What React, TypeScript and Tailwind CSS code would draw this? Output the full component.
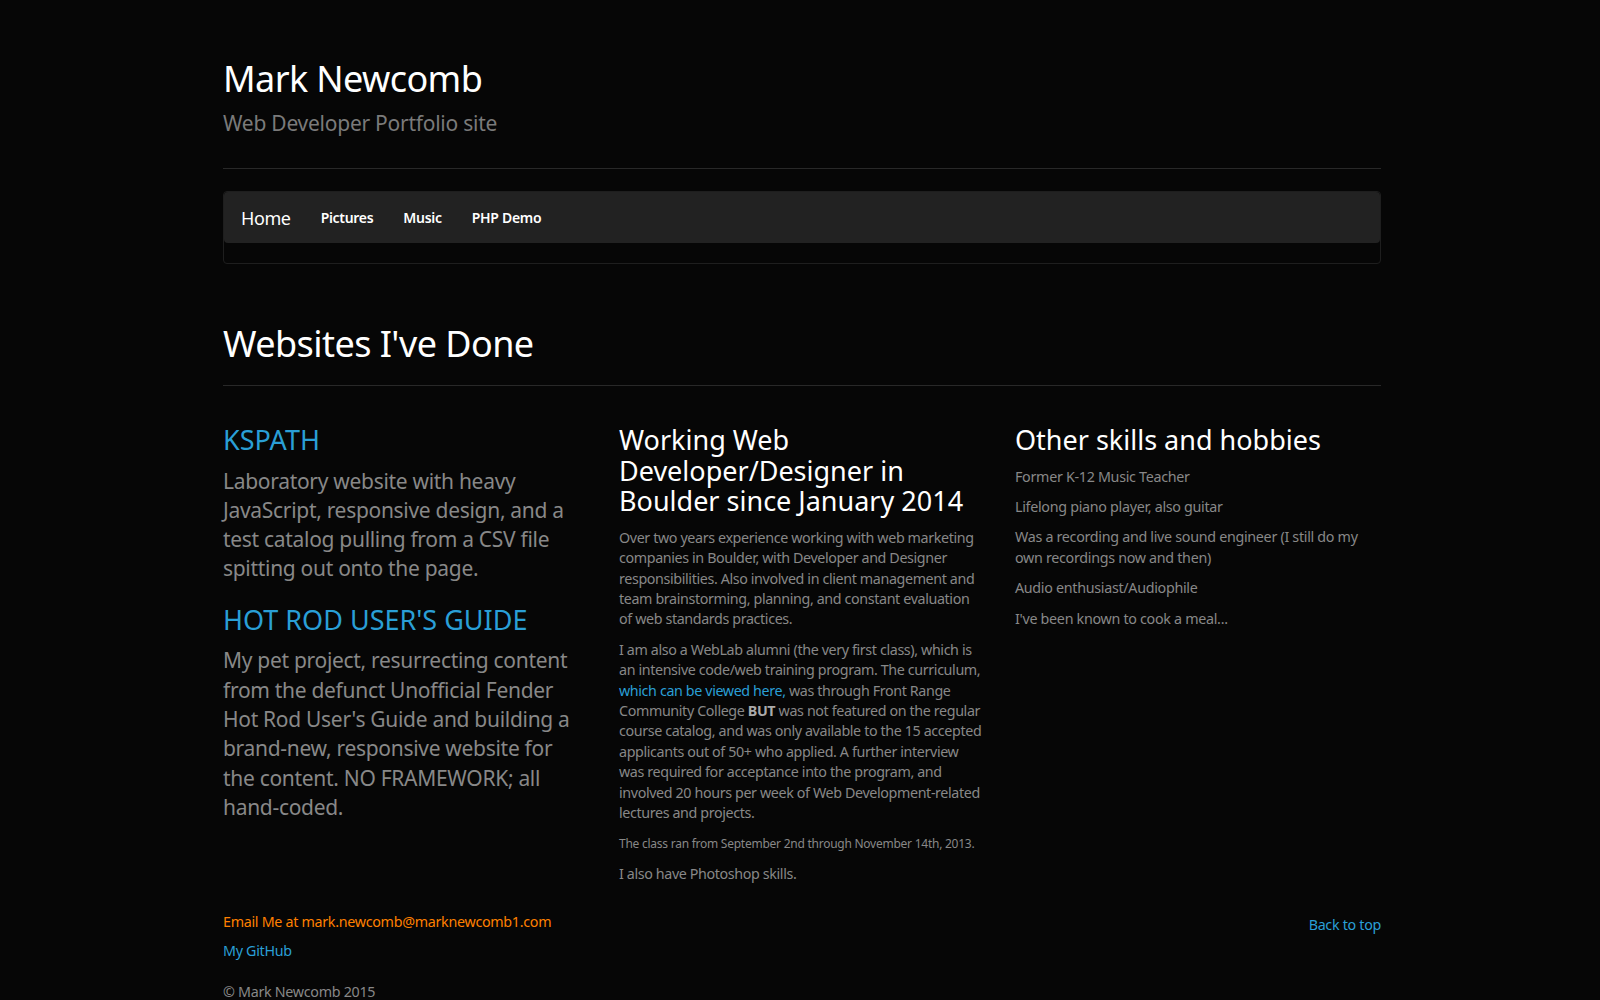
const FONT = "font-['Noto_Sans','Open_Sans',sans-serif]";

const NAV_LINKS = ["Pictures", "Music", "PHP Demo"];

const HOBBIES = [
  "Former K-12 Music Teacher",
  "Lifelong piano player, also guitar",
  "Was a recording and live sound engineer (I still do my own recordings now and then)",
  "Audio enthusiast/Audiophile",
  "I've been known to cook a meal...",
];

export default function App() {
  return (
    <div className={`min-h-screen bg-[#060606] text-[#888] ${FONT}`}>
      <div className="mx-auto w-[1162px] pl-[4px]">
        {/* header */}
        <header className="pt-[59px]">
          <h1 className="text-[36px] leading-[39.6px] tracking-[-0.6px] text-white">
            Mark Newcomb
          </h1>
          <p className="mt-[10px] text-[21px] leading-[29.4px] tracking-[-0.25px] text-[#7a7a7a]">
            Web Developer Portfolio site
          </p>
        </header>
        <hr className="mt-[30px] border-t border-[#282828]" />

        {/* nav */}
        <div className="mt-[22px] rounded-[4px] border border-[#1e1e1e] pb-[20px]">
          <nav className="flex h-[51px] items-center gap-[30px] rounded-[4px] bg-[#222] pl-[17px]">
            <span className="text-[18px] leading-[20px] tracking-[-0.4px] text-white">Home</span>
            {NAV_LINKS.map((link) => (
              <span
                key={link}
                className="text-[14px] font-semibold leading-[20px] tracking-[-0.3px] text-white"
              >
                {link}
              </span>
            ))}
          </nav>
        </div>

        {/* page header */}
        <div className="mt-[60px] border-b border-[#282828] pb-[21px]">
          <h1 className="text-[36px] leading-[40px] tracking-[-0.55px] text-white">
            Websites I've Done
          </h1>
        </div>

        {/* columns */}
        <div className="mt-[39px] grid grid-cols-3 gap-x-[30px]">
          <div className="pr-[3px] tracking-[-0.3px]">
            <h2 className="text-[27px] leading-[30.6px] tracking-normal text-[#2a9fd6]">
              KSPATH
            </h2>
            <p className="mt-[11px] text-[21px] leading-[29.3px]">
              Laboratory website with heavy JavaScript, responsive design, and a test catalog
              pulling from a CSV file spitting out onto the page.
            </p>
            <h2 className="mt-[21px] text-[27px] leading-[30.6px] tracking-normal text-[#2a9fd6]">
              HOT ROD USER'S GUIDE
            </h2>
            <p className="mt-[11px] text-[21px] leading-[29.3px]">
              My pet project, resurrecting content from the defunct Unofficial Fender Hot Rod
              User's Guide and building a brand-new, responsive website for the content. NO
              FRAMEWORK; all hand-coded.
            </p>
          </div>

          <div className="text-[14.3px] leading-[20.4px] tracking-[-0.38px]">
            <h2 className="text-[27px] leading-[30.6px] tracking-normal text-white">
              Working Web Developer/Designer in Boulder since January 2014
            </h2>
            <p className="mt-[11px]">
              Over two years experience working with web marketing companies in Boulder, with
              Developer and Designer responsibilities. Also involved in client management and
              team brainstorming, planning, and constant evaluation of web standards practices.
            </p>
            <p className="mt-[10px]">
              I am also a WebLab alumni (the very first class), which is an intensive code/web
              training program. The curriculum,{" "}
              <a className="text-[#2a9fd6]" href="#">
                which can be viewed here,
              </a>{" "}
              was through Front Range Community College <b className="text-[#aaa]">BUT</b> was
              not featured on the regular course catalog, and was only available to the 15
              accepted applicants out of 50+ who applied. A further interview was required for
              acceptance into the program, and involved 20 hours per week of Web
              Development-related lectures and projects.
            </p>
            <p className="mt-[10px]">
              <small className="text-[12px] tracking-[-0.25px]">
                The class ran from September 2nd through November 14th, 2013.
              </small>
            </p>
            <p className="mt-[9px]">I also have Photoshop skills.</p>
          </div>

          <div className="text-[14.3px] leading-[20.4px] tracking-[-0.3px]">
            <h2 className="text-[27px] leading-[30.6px] tracking-normal text-white">
              Other skills and hobbies
            </h2>
            <div className="mt-[11px] flex flex-col gap-[10px]">
              {HOBBIES.map((h) => (
                <p key={h}>{h}</p>
              ))}
            </div>
          </div>
        </div>

        {/* footer */}
        <footer className="mt-[28px] pb-[20px] text-[14.3px] leading-[20.4px] tracking-[-0.3px]">
          <div className="flex justify-between">
            <div>
              <p className="text-[#ff8000]">Email Me at mark.newcomb@marknewcomb1.com</p>
              <p className="mt-[8px]">
                <a className="text-[#2a9fd6]" href="#">
                  My GitHub
                </a>
              </p>
            </div>
            <a className="mt-[2.6px] text-[#2a9fd6]" href="#">
              Back to top
            </a>
          </div>
          <p className="mt-[21px]">© Mark Newcomb 2015</p>
        </footer>
      </div>
    </div>
  );
}
